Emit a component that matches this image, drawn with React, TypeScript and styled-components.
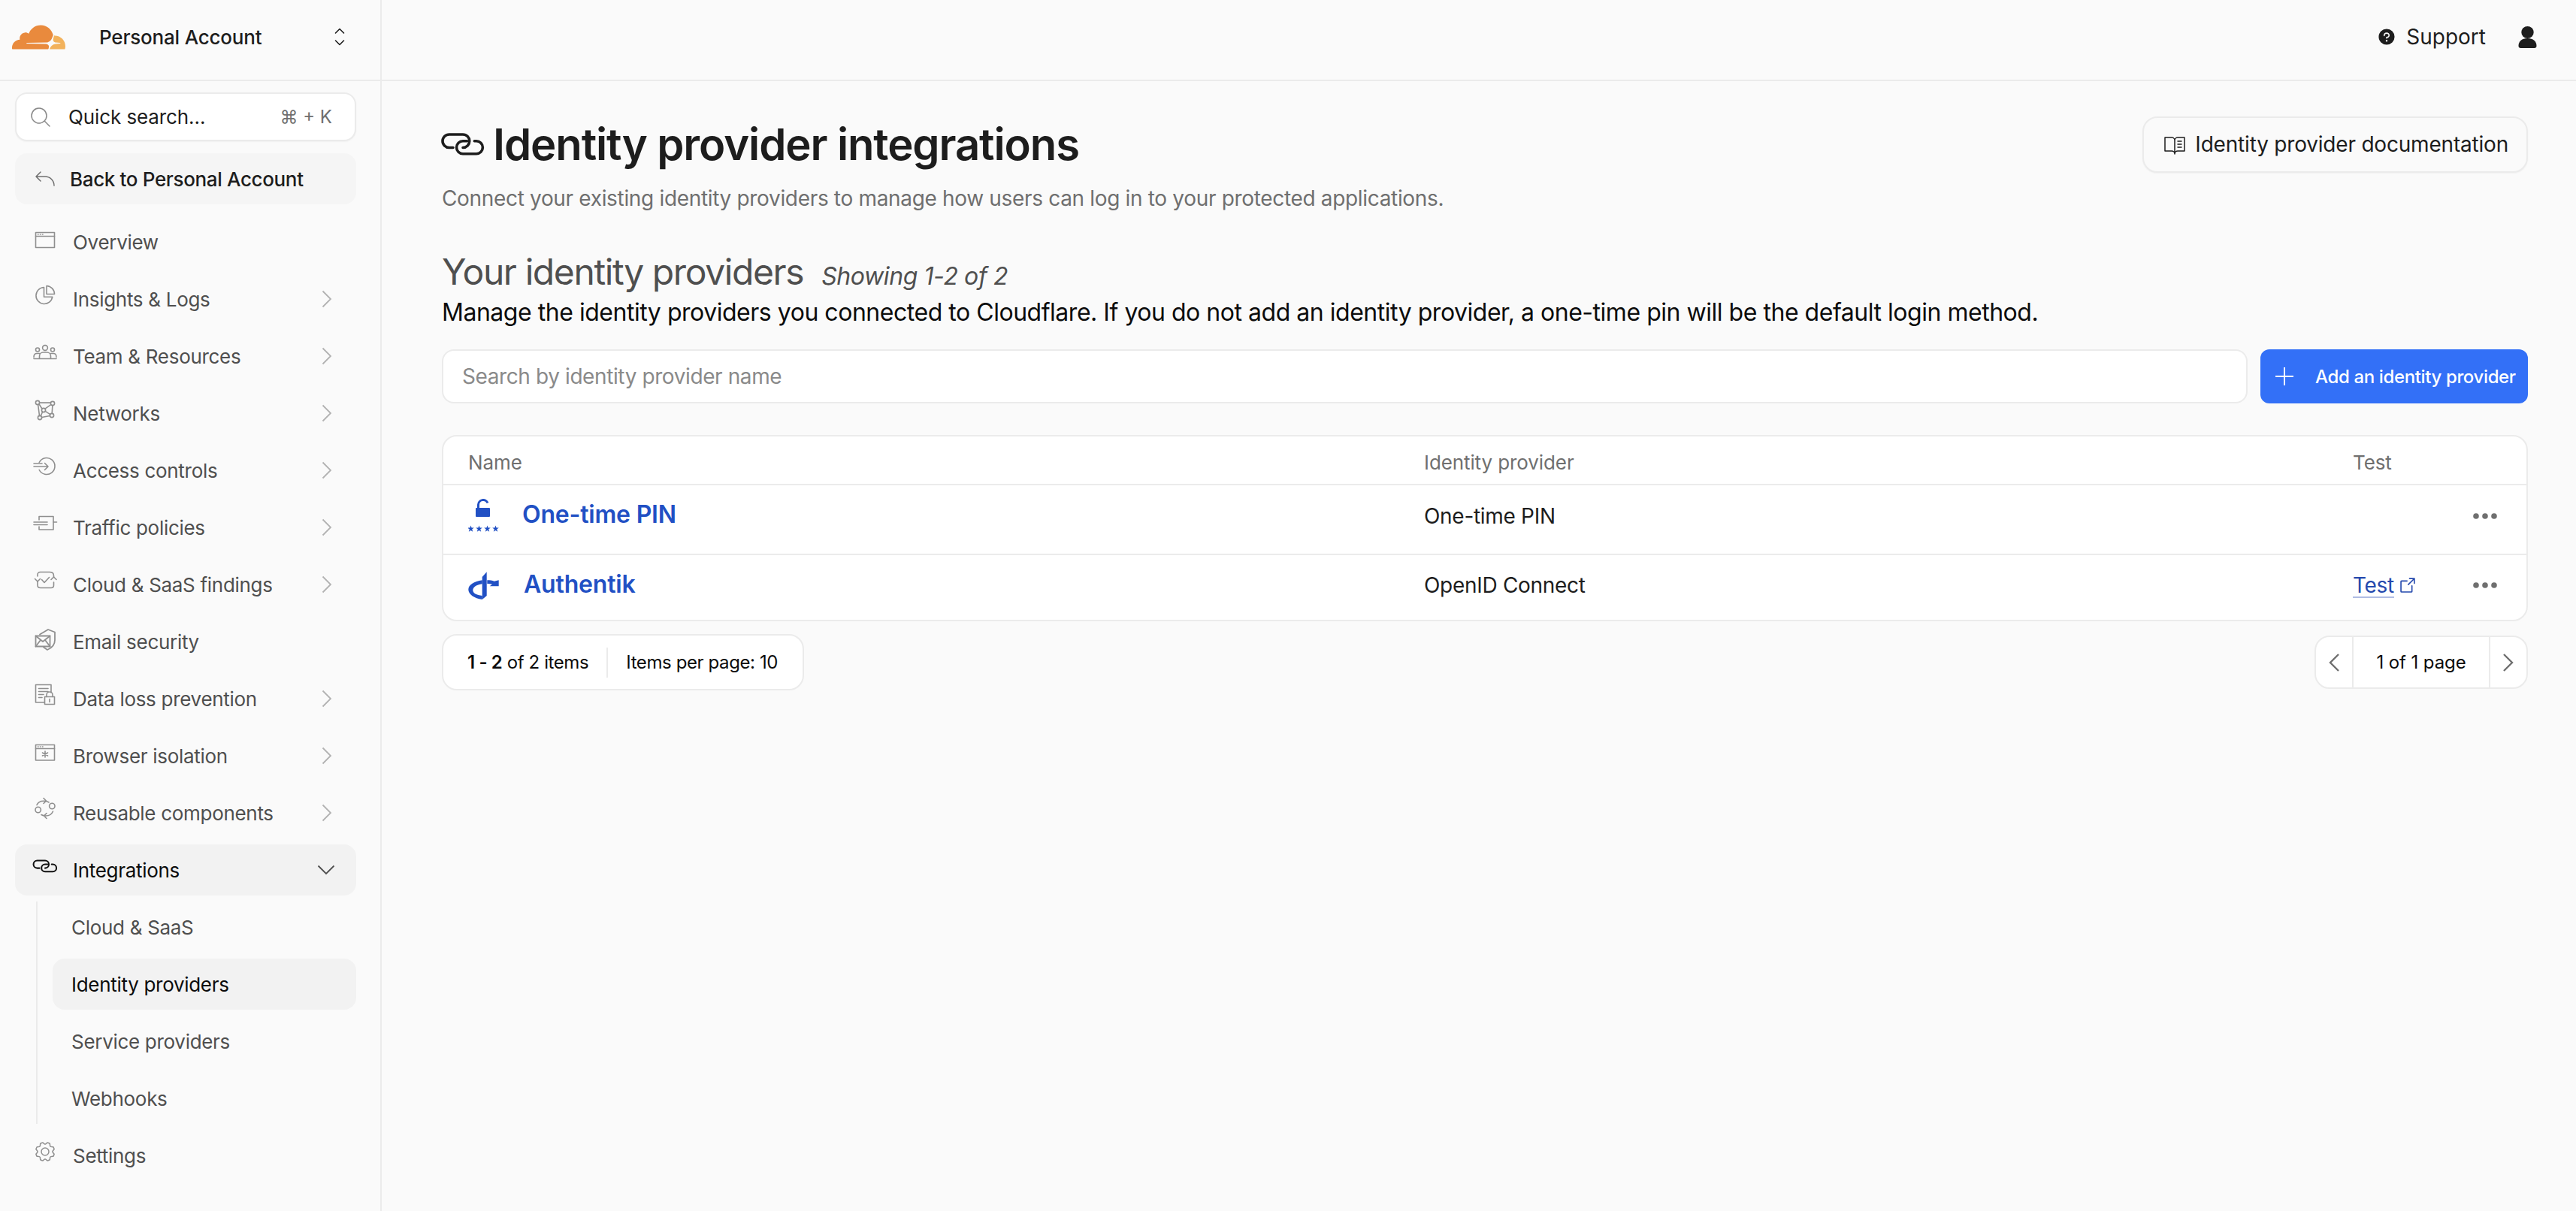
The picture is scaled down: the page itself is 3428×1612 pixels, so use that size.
import React from "react";
import styled, { createGlobalStyle } from "styled-components";
import {
  PiMagnifyingGlassLight,
  PiArrowBendUpLeftLight,
  PiGearLight,
  PiQuestionFill,
  PiBookOpenTextLight,
  PiArrowSquareOut,
} from "react-icons/pi";

const GlobalStyle = createGlobalStyle`
  html, body { margin: 0; padding: 0; background: #fafafa; }
  body { font-family: Inter, "Liberation Sans", sans-serif; color: #1d1d1d; }
  * { box-sizing: border-box; }
`;

const Page = styled.div`
  display: flex;
  width: 3428px;
  height: 1612px;
  overflow: hidden;
  background: #fafafa;
`;

const Sidebar = styled.aside`
  width: 508px;
  flex: none;
  border-right: 2px solid #ebebeb;
  display: flex;
  flex-direction: column;
`;

const AccountBar = styled.div`
  height: 108px;
  flex: none;
  border-bottom: 2px solid #ebebeb;
  display: flex;
  align-items: center;
  padding: 0 41px 8px 16px;
`;

const LogoMark = styled.svg`
  width: 71px;
  height: 71px;
  flex: none;
`;

const AccountName = styled.span`
  margin-left: 45px;
  font-size: 26px;
  font-weight: 500;
  letter-spacing: -0.2px;
  color: #1d1d1d;
  flex: 1;
`;

const Nav = styled.nav`
  display: flex;
  flex-direction: column;
  padding: 15px 32px 0 20px;
`;

const QuickSearch = styled.div`
  height: 65px;
  background: #fff;
  border: 2px solid #ebebeb;
  border-radius: 16px;
  box-shadow: 0 1px 2px rgba(0, 0, 0, 0.04);
  display: flex;
  align-items: center;
  padding: 0 30px 0 16px;
  color: #8a8a8a;
`;

const QuickLabel = styled.span`
  margin-left: 21px;
  flex: 1;
  font-size: 26px;
  letter-spacing: -0.1px;
  color: #1d1d1d;
`;

const Shortcut = styled.span`
  font-size: 24px;
  color: #6f6f6f;
`;

const BackRow = styled.div`
  height: 68px;
  margin-top: 16px;
  margin-bottom: 8px;
  border-radius: 16px;
  background: #f5f5f5;
  display: flex;
  align-items: center;
  padding-left: 24px;
  color: #6f6f6f;
`;

const BackLabel = styled.span`
  margin-left: 17px;
  font-size: 26px;
  font-weight: 500;
  letter-spacing: -0.35px;
  color: #1d1d1d;
`;

const NavRow = styled.div<{ $active?: boolean }>`
  height: 68px;
  margin-top: 8px;
  flex: none;
  border-radius: 16px;
  background: ${(p) => (p.$active ? "#f2f2f2" : "transparent")};
  display: flex;
  align-items: center;
  padding-left: 24px;
  color: ${(p) => (p.$active ? "#111" : "#8f8f8f")};
`;

const NavLabel = styled.span<{ $active?: boolean }>`
  margin-left: 21px;
  flex: 1;
  font-size: 26px;
  letter-spacing: -0.3px;
  color: ${(p) => (p.$active ? "#0c0c0c" : "#4f4f4f")};
`;

const IconSlot = styled.span`
  width: 32px;
  height: 32px;
  flex: none;
  margin-bottom: 10px;
  display: flex;
  align-items: center;
  justify-content: center;
`;

const Line = styled.svg<{ $w?: number; $stroke?: number }>`
  width: ${(p) => p.$w ?? 32}px;
  height: ${(p) => p.$w ?? 32}px;
  flex: none;
  overflow: visible;
  fill: none;
  stroke: currentColor;
  stroke-width: ${(p) => p.$stroke ?? 1.6};
  stroke-linecap: round;
  stroke-linejoin: round;
`;

const CaretRight = styled.svg`
  width: 14px;
  height: 24px;
  flex: none;
  margin-right: 32px;
  fill: none;
  stroke: #b2b2b2;
  stroke-width: 1.8;
`;

const CaretDown = styled.svg`
  width: 24px;
  height: 14px;
  flex: none;
  margin-right: 28px;
  fill: none;
  stroke: #4f4f4f;
  stroke-width: 1.8;
`;

const SubList = styled.div`
  margin-left: 28px;
  margin-top: 8px;
  border-left: 2px solid #ebebeb;
  padding-left: 20px;
  display: flex;
  flex-direction: column;
  gap: 8px;
`;

const SubRow = styled.div<{ $active?: boolean }>`
  height: 68px;
  border-radius: 16px;
  background: ${(p) => (p.$active ? "#f2f2f2" : "transparent")};
  display: flex;
  align-items: center;
  padding-left: 25px;
  font-size: 26px;
  letter-spacing: -0.3px;
  color: ${(p) => (p.$active ? "#0c0c0c" : "#4f4f4f")};
`;

const Main = styled.main`
  flex: 1;
  min-width: 0;
  display: flex;
  flex-direction: column;
`;

const TopBar = styled.header`
  height: 108px;
  flex: none;
  border-bottom: 2px solid #ebebeb;
  display: flex;
  align-items: center;
  justify-content: flex-end;
  padding: 0 52px 8px 0;
`;

const SupportLink = styled.span`
  display: flex;
  align-items: center;
  gap: 13px;
  font-size: 28px;
  color: #1d1d1d;
`;

const UserMark = styled.svg`
  width: 25px;
  height: 29px;
  margin-left: 43px;
  fill: #1d1d1d;
`;

const Content = styled.div`
  padding: 46px 64px 0 80px;
`;

const TitleRow = styled.div`
  display: flex;
  align-items: center;
  justify-content: space-between;
  height: 76px;
`;

const TitleGroup = styled.div`
  display: flex;
  align-items: center;
  gap: 12px;
`;

const Title = styled.h1`
  margin: 0;
  font-size: 58px;
  font-weight: 600;
  letter-spacing: -1.1px;
  color: #1d1d1d;
`;

const DocButton = styled.button`
  height: 75px;
  padding: 0 24px 0 25px;
  border: 2px solid #ebebeb;
  border-radius: 20px;
  background: #fafafa;
  box-shadow: 0 1px 2px rgba(0, 0, 0, 0.04);
  display: flex;
  align-items: center;
  gap: 11px;
  font-family: inherit;
  font-size: 28px;
  letter-spacing: -0.2px;
  color: #1d1d1d;
`;

const Subtitle = styled.p`
  margin: 14px 0 0;
  font-size: 28px;
  line-height: 40px;
  letter-spacing: -0.33px;
  color: #6f6f6f;
`;

const SectionHead = styled.div`
  margin-top: 48px;
  display: flex;
  align-items: baseline;
  gap: 24px;
`;

const SectionTitle = styled.h2`
  margin: 0;
  font-size: 48px;
  line-height: 60px;
  font-weight: 400;
  letter-spacing: -1.4px;
  color: #4f4f4f;
`;

const SectionCount = styled.span`
  font-size: 32px;
  font-style: italic;
  letter-spacing: -0.4px;
  color: #4f4f4f;
`;

const Description = styled.p`
  margin: 2px 0 0;
  font-size: 32px;
  line-height: 44px;
  letter-spacing: -0.47px;
  color: #0c0c0c;
`;

const SearchRow = styled.div`
  margin-top: 27px;
  display: flex;
  gap: 17px;
`;

const SearchInput = styled.div`
  flex: 1;
  height: 72px;
  background: #fff;
  border: 2px solid #ebebeb;
  border-radius: 16px;
  display: flex;
  align-items: center;
  padding-left: 25px;
  font-size: 28px;
  letter-spacing: -0.4px;
  color: #8a8a8a;
`;

const AddButton = styled.button`
  width: 356px;
  height: 72px;
  flex: none;
  border: 0;
  border-radius: 12px;
  background: #3370f7;
  color: #fff;
  display: flex;
  align-items: center;
  padding: 0 0 0 20px;
  gap: 29px;
  white-space: nowrap;
  font-family: inherit;
  font-size: 24px;
  font-weight: 500;
  letter-spacing: -0.37px;
`;

const PlusMark = styled.svg`
  width: 24px;
  height: 24px;
  flex: none;
  stroke: #fff;
  stroke-width: 2;
`;

const Table = styled.div`
  margin-top: 42px;
  background: #fff;
  border: 2px solid #ebebeb;
  border-radius: 20px;
  overflow: hidden;
`;

const Row = styled.div<{ $height: number; $lift?: number; $head?: boolean }>`
  display: grid;
  grid-template-columns: 1272px 1236px 159px auto;
  align-items: center;
  height: ${(p) => p.$height}px;
  padding-left: 33px;
  padding-bottom: ${(p) => p.$lift ?? 0}px;
  padding-top: ${(p) => (p.$head ? 6 : 0)}px;
  border-bottom: ${(p) => (p.$head ? "2px solid #ebebeb" : "0")};
  font-size: ${(p) => (p.$head ? 26 : 28)}px;
  letter-spacing: ${(p) => (p.$head ? -0.1 : -0.3)}px;
  color: ${(p) => (p.$head ? "#6f6f6f" : "#1d1d1d")};
`;

const Separated = styled.div`
  border-bottom: 2px solid #ebebeb;
`;

const NameCell = styled.div`
  display: flex;
  align-items: center;
`;

const NameLink = styled.a<{ $gap: number }>`
  margin-left: ${(p) => p.$gap}px;
  margin-bottom: 4px;
  font-size: 32px;
  font-weight: 600;
  letter-spacing: -0.2px;
  color: #2150c4;
`;

const TestLink = styled.span`
  display: flex;
  align-items: center;
  gap: 5px;
  color: #2549ad;
`;

const TestWord = styled.a`
  color: inherit;
  text-decoration: underline;
  text-decoration-color: #b0bde4;
  text-decoration-thickness: 2px;
  text-underline-offset: 5px;
`;

const Dots = styled.svg`
  width: 34px;
  height: 10px;
  display: block;
  fill: #6f6f6f;
`;

const PagerRow = styled.div`
  margin-top: 17px;
  display: flex;
  align-items: center;
  justify-content: space-between;
`;

const ItemCount = styled.div`
  height: 75px;
  background: #fff;
  border: 2px solid #ebebeb;
  border-radius: 20px;
  display: flex;
  align-items: center;
  padding: 0 33px 0 32px;
  font-size: 24px;
  letter-spacing: -0.4px;
  color: #0c0c0c;
`;

const Strong = styled.b`
  font-weight: 600;
`;

const CountDivider = styled.span`
  width: 2px;
  height: 40px;
  background: #ebebeb;
  margin: 0 24px;
`;

const Pager = styled.div`
  height: 71px;
  width: 284px;
  background: #fff;
  border: 2px solid #ebebeb;
  border-radius: 20px;
  display: grid;
  grid-template-columns: 48px 1fr 48px;
  align-items: stretch;
  font-size: 24px;
  letter-spacing: -0.1px;
  color: #0c0c0c;
`;

const PagerArrow = styled.span`
  display: flex;
  align-items: center;
  justify-content: center;
  color: #6f6f6f;
`;

const PagerLabel = styled.span`
  display: flex;
  align-items: center;
  justify-content: center;
  border-left: 2px solid #ebebeb;
  border-right: 2px solid #ebebeb;
`;

const Chevron = styled.svg`
  width: 16px;
  height: 26px;
  fill: none;
  stroke: currentColor;
  stroke-width: 2.4;
`;

const Link2 = ({ w = 32, stroke = 11 }: { w?: number; stroke?: number }) => (
  <Line viewBox="22 22 172 122" $w={w} $stroke={stroke}>
    <path d="M68 97H52A27 27 0 0 1 52 43H108A27 27 0 0 1 108 97" />
    <path d="M155 70H163A26 26 0 0 1 163 122H108A26 26 0 0 1 108 70H125" />
  </Line>
);

const IOverview = () => (
  <Line viewBox="0 0 32 32">
    <rect x="3.5" y="8.5" width="25" height="20" />
    <path d="M3.5 13.5H28.5M6.5 11H7M9.5 11H10M12.5 11H13" />
  </Line>
);
const IPie = () => (
  <Line viewBox="0 0 32 32">
    <path d="M14.5 5.5A11 11 0 1 0 25.8 18.2H14.5Z" />
    <path d="M18 3.5A11 11 0 0 1 28.5 14.5H18Z" />
  </Line>
);
const ITeam = () => (
  <Line viewBox="0 0 32 32">
    <circle cx="16" cy="10" r="3.4" />
    <circle cx="6" cy="12.5" r="2.5" />
    <circle cx="26" cy="12.5" r="2.5" />
    <path d="M8.5 24V21C8.5 17.8 11 16 13.5 16H18.5C21 16 23.5 17.8 23.5 21V24" />
    <path d="M1 22.5C1 19 2.5 17.5 5 17.5H8.5M31 22.5C31 19 29.5 17.5 27 17.5H23.5" />
    <path d="M1 24.5H31" />
  </Line>
);
const INetworks = () => (
  <Line viewBox="0 0 32 32">
    <circle cx="6" cy="7" r="2.6" />
    <circle cx="26" cy="8" r="2.6" />
    <circle cx="14" cy="17" r="2.6" />
    <circle cx="25" cy="24" r="2.6" />
    <circle cx="9" cy="27" r="2.6" />
    <path d="M8.6 7.1H23.4M7.9 8.8L12.1 15.2M6.6 9.5L8.5 24.4M23.8 9.6L15.9 15.2M25.9 10.6L25.2 21.4M16.2 18.4L22.8 22.6M11.6 26.5L22.4 24.5M12.6 19.2L10.2 24.6" />
  </Line>
);
const IAccess = () => (
  <Line viewBox="0 0 32 32">
    <path d="M8.2 10.5A11 11 0 1 1 8.2 20.5" />
    <path d="M1 12H12M1 16H20M15.5 11.5L20 16L15.5 20.5" />
  </Line>
);
const ITraffic = () => (
  <Line viewBox="0 0 32 32">
    <path d="M8 11V6.5H27V24H8V20" />
    <path d="M1 14H19M27 14H31.5M1 17.5H19" />
  </Line>
);
const IFindings = () => (
  <Line viewBox="0 0 32 32">
    <path d="M6 10V8C6 6 7.5 4.5 9.5 4.5H22C25.5 4.5 27.5 6 27.5 9.5V11" />
    <path d="M27.5 18V22C27.5 24.5 26 25.5 24 25.5H10C7.5 25.5 6 24.5 6 22V17" />
    <path d="M2.5 13.5L6 17L9.5 13.5M24 14.5L27.5 11L31 14.5M11.5 14.5L15 18.5L21.5 11.5" />
  </Line>
);
const IEmail = () => (
  <Line viewBox="0 0 32 32" $stroke={1.8}>
    <rect x="3.5" y="13.5" width="19" height="14" />
    <path d="M3.5 13.5L13 21L22.5 13.5M3.5 27.5L10 19M22.5 27.5L16 19" />
    <path d="M9 11.5L20 5L29 8.5V19C29 25 25 29.5 19 32L14 28.5" />
  </Line>
);
const IDlp = () => (
  <Line viewBox="0 0 32 32">
    <path d="M24 13V2.5H3.5V26H15" />
    <path d="M7.5 7.5H20M7.5 11.5H20M7.5 15.5H14M7.5 19.5H12" />
    <rect x="15.5" y="18.5" width="13" height="10" />
    <path d="M18 18.5V16A4 4 0 0 1 26 16V18.5M22 21.5V25.5" />
  </Line>
);
const IBrowser = () => (
  <Line viewBox="0 0 32 32">
    <rect x="3.5" y="6.5" width="25" height="20.5" />
    <path d="M3.5 11.5H28.5M6.5 9H7M9.5 9H10M12.5 9H13" />
    <path d="M16 15V23M12.5 17L19.5 21M19.5 17L12.5 21" />
  </Line>
);
const IReuse = () => (
  <Line viewBox="0 0 32 32">
    <circle cx="6.7" cy="17" r="3.7" />
    <circle cx="25.3" cy="12" r="3.7" />
    <path d="M5 10.5C6.5 7 10 5 15 5.2C17.5 5.3 19.5 6 21 7M14 1.5L17.5 5L14 8.5" />
    <path d="M26.5 19C25 22.5 21.5 25 17 25C14.5 25 12.5 24.5 11 23.5M18 21.5L14.5 25L18 28.5" />
  </Line>
);

const rows: { label: string; icon: React.ReactNode; caret: boolean }[] = [
  { label: "Overview", icon: <IOverview />, caret: false },
  { label: "Insights & Logs", icon: <IPie />, caret: true },
  { label: "Team & Resources", icon: <ITeam />, caret: true },
  { label: "Networks", icon: <INetworks />, caret: true },
  { label: "Access controls", icon: <IAccess />, caret: true },
  { label: "Traffic policies", icon: <ITraffic />, caret: true },
  { label: "Cloud & SaaS findings", icon: <IFindings />, caret: true },
  { label: "Email security", icon: <IEmail />, caret: false },
  { label: "Data loss prevention", icon: <IDlp />, caret: true },
  { label: "Browser isolation", icon: <IBrowser />, caret: true },
  { label: "Reusable components", icon: <IReuse />, caret: true },
];

const subRows = ["Cloud & SaaS", "Identity providers", "Service providers", "Webhooks"];

const Cloudflare = () => (
  <LogoMark viewBox="0 0 24 24">
    <path
      fill="#e98a3d"
      d="M16.5088 16.8447c.1475-.5068.0908-.9707-.1553-1.3154-.2246-.3164-.6045-.499-1.0615-.5205l-8.6592-.1123a.1559.1559 0 0 1-.1333-.0713c-.0283-.042-.0351-.0986-.021-.1553.0278-.084.1123-.1484.2036-.1562l8.7359-.1123c1.0351-.0489 2.1601-.8868 2.5537-1.9136l.499-1.3013c.0215-.0561.0293-.1128.0147-.168-.5625-2.5463-2.835-4.4453-5.5499-4.4453-2.5039 0-4.6284 1.6177-5.3876 3.8614-.4927-.3658-1.1187-.5625-1.794-.499-1.2026.119-2.1665 1.083-2.2861 2.2856-.0283.31-.0069.6128.0635.894C1.5683 13.171 0 14.7754 0 16.752c0 .1748.0142.3515.0352.5273.0141.083.0844.1475.1689.1475h15.9814c.0909 0 .1758-.0645.2032-.1553l.12-.4268z"
    />
    <path
      fill="#f2b25c"
      d="M19.2656 11.2813c-.0771 0-.1611 0-.2383.0112-.0566 0-.1054.0415-.127.0976l-.3378 1.1744c-.1475.5068-.0918.9707.1543 1.3164.2256.3164.6055.498 1.0625.5195l1.8437.1133c.0557 0 .1055.0263.1329.0703.0283.043.0351.1074.0214.1562-.0283.084-.1132.1485-.204.1553l-1.921.1123c-1.041.0488-2.1582.8867-2.5527 1.914l-.1406.3585c-.0283.0713.0215.1416.0986.1416h6.5977c.0771 0 .1474-.0489.169-.126.1122-.4082.1757-.837.1757-1.2803 0-2.6025-2.125-4.727-4.7344-4.727"
    />
  </LogoMark>
);

const STAR = "M0 -4.4L1.1 -1.4L4.3 -1.4L1.7 0.6L2.7 3.7L0 1.9L-2.7 3.7L-1.7 0.6L-4.3 -1.4L-1.1 -1.4Z";

const LockPin = () => (
  <svg width="41" height="46" viewBox="0 0 41 46">
    <rect x="10" y="12" width="19" height="12" rx="1" fill="#2150c4" />
    <path d="M13.5 12V8A6.5 6.5 0 0 1 26 5.5" fill="none" stroke="#2150c4" strokeWidth="3" />
    {[3.5, 14.5, 25.5, 36.5].map((x) => (
      <path key={x} transform={`translate(${x} 40)`} d={STAR} fill="#2150c4" />
    ))}
  </svg>
);

const OpenId = () => (
  <svg width="41" height="37" viewBox="0 -1 41 37" fill="#2150c4">
    <path d="M24.7 -0.7L18.7 6V36L24.7 31Z" />
    <path d="M18.7 10.3C8 12 0.3 16.5 0.3 22.7C0.3 29 8 34.5 18.7 36V31C11 30 6.3 27.5 6.3 23.7C6.3 19.5 11 16.5 18.7 15.3Z" />
    <path d="M25.3 10.3C29 10.3 32 10.8 34.7 11.7L40.7 10.3V18.3H28.7L32 15.7C30 15.2 27.5 15 25.3 15Z" />
  </svg>
);

const DotRow = () => (
  <Dots viewBox="0 0 34 10">
    <circle cx="5" cy="5" r="3.8" />
    <circle cx="17" cy="5" r="3.8" />
    <circle cx="29" cy="5" r="3.8" />
  </Dots>
);

export default function App() {
  return (
    <Page>
      <GlobalStyle />
      <Sidebar>
        <AccountBar>
          <Cloudflare />
          <AccountName>Personal Account</AccountName>
          <Line viewBox="0 0 14 26" $w={26} $stroke={1.6}>
            <path d="M1.5 8L7 2.5L12.5 8M1.5 18L7 23.5L12.5 18" />
          </Line>
        </AccountBar>
        <Nav>
          <QuickSearch>
            <PiMagnifyingGlassLight size={32} />
            <QuickLabel>Quick search...</QuickLabel>
            <Shortcut>⌘ + K</Shortcut>
          </QuickSearch>
          <BackRow>
            <PiArrowBendUpLeftLight size={32} />
            <BackLabel>Back to Personal Account</BackLabel>
          </BackRow>
          {rows.map((r) => (
            <NavRow key={r.label}>
              <IconSlot>{r.icon}</IconSlot>
              <NavLabel>{r.label}</NavLabel>
              {r.caret && (
                <CaretRight viewBox="0 0 14 24">
                  <path d="M1.5 1.5L12 12L1.5 22.5" />
                </CaretRight>
              )}
            </NavRow>
          ))}
          <NavRow $active>
            <IconSlot>
              <Link2 />
            </IconSlot>
            <NavLabel $active>Integrations</NavLabel>
            <CaretDown viewBox="0 0 24 14">
              <path d="M1.5 1.5L12 12L22.5 1.5" />
            </CaretDown>
          </NavRow>
          <SubList>
            {subRows.map((s) => (
              <SubRow key={s} $active={s === "Identity providers"}>
                {s}
              </SubRow>
            ))}
          </SubList>
          <NavRow>
            <IconSlot>
              <PiGearLight size={32} />
            </IconSlot>
            <NavLabel>Settings</NavLabel>
          </NavRow>
        </Nav>
      </Sidebar>
      <Main>
        <TopBar>
          <SupportLink>
            <PiQuestionFill size={26} />
            Support
          </SupportLink>
          <UserMark viewBox="0 0 25 29">
            <ellipse cx="12.5" cy="8" rx="8.2" ry="8" />
            <path d="M0.5 26C0.5 20 5 16 12.5 16C20 16 24.5 20 24.5 26C24.5 28 23.5 29 21.5 29H3.5C1.5 29 0.5 28 0.5 26Z" />
          </UserMark>
        </TopBar>
        <Content>
          <TitleRow>
            <TitleGroup>
              <Link2 w={56} stroke={11} />
              <Title>Identity provider integrations</Title>
            </TitleGroup>
            <DocButton>
              <PiBookOpenTextLight size={32} />
              Identity provider documentation
            </DocButton>
          </TitleRow>
          <Subtitle>
            Connect your existing identity providers to manage how users can log in to your protected
            applications.
          </Subtitle>
          <SectionHead>
            <SectionTitle>Your identity providers</SectionTitle>
            <SectionCount>Showing 1-2 of 2</SectionCount>
          </SectionHead>
          <Description>
            Manage the identity providers you connected to Cloudflare. If you do not add an identity
            provider, a one-time pin will be the default login method.
          </Description>
          <SearchRow>
            <SearchInput>Search by identity provider name</SearchInput>
            <AddButton>
              <PlusMark viewBox="0 0 24 24">
                <path d="M12 0V24M0 12H24" />
              </PlusMark>
              Add an identity provider
            </AddButton>
          </SearchRow>
          <Table>
            <Row $height={65} $head>
              <span>Name</span>
              <span>Identity provider</span>
              <span>Test</span>
            </Row>
            <Separated>
              <Row $height={91} $lift={10}>
                <NameCell>
                  <LockPin />
                  <NameLink $gap={31}>One-time PIN</NameLink>
                </NameCell>
                <span>One-time PIN</span>
                <span />
                <DotRow />
              </Row>
            </Separated>
            <Row $height={86} $lift={6}>
              <NameCell>
                <OpenId />
                <NameLink $gap={33}>Authentik</NameLink>
              </NameCell>
              <span>OpenID Connect</span>
              <TestLink>
                <TestWord>Test</TestWord>
                <PiArrowSquareOut size={26} />
              </TestLink>
              <DotRow />
            </Row>
          </Table>
          <PagerRow>
            <ItemCount>
              <span>
                <Strong>1 - 2</Strong> of 2 items
              </span>
              <CountDivider />
              <span>Items per page: 10</span>
            </ItemCount>
            <Pager>
              <PagerArrow>
                <Chevron viewBox="0 0 16 26">
                  <path d="M14 2L3 13L14 24" />
                </Chevron>
              </PagerArrow>
              <PagerLabel>1 of 1 page</PagerLabel>
              <PagerArrow>
                <Chevron viewBox="0 0 16 26">
                  <path d="M2 2L13 13L2 24" />
                </Chevron>
              </PagerArrow>
            </Pager>
          </PagerRow>
        </Content>
      </Main>
    </Page>
  );
}
